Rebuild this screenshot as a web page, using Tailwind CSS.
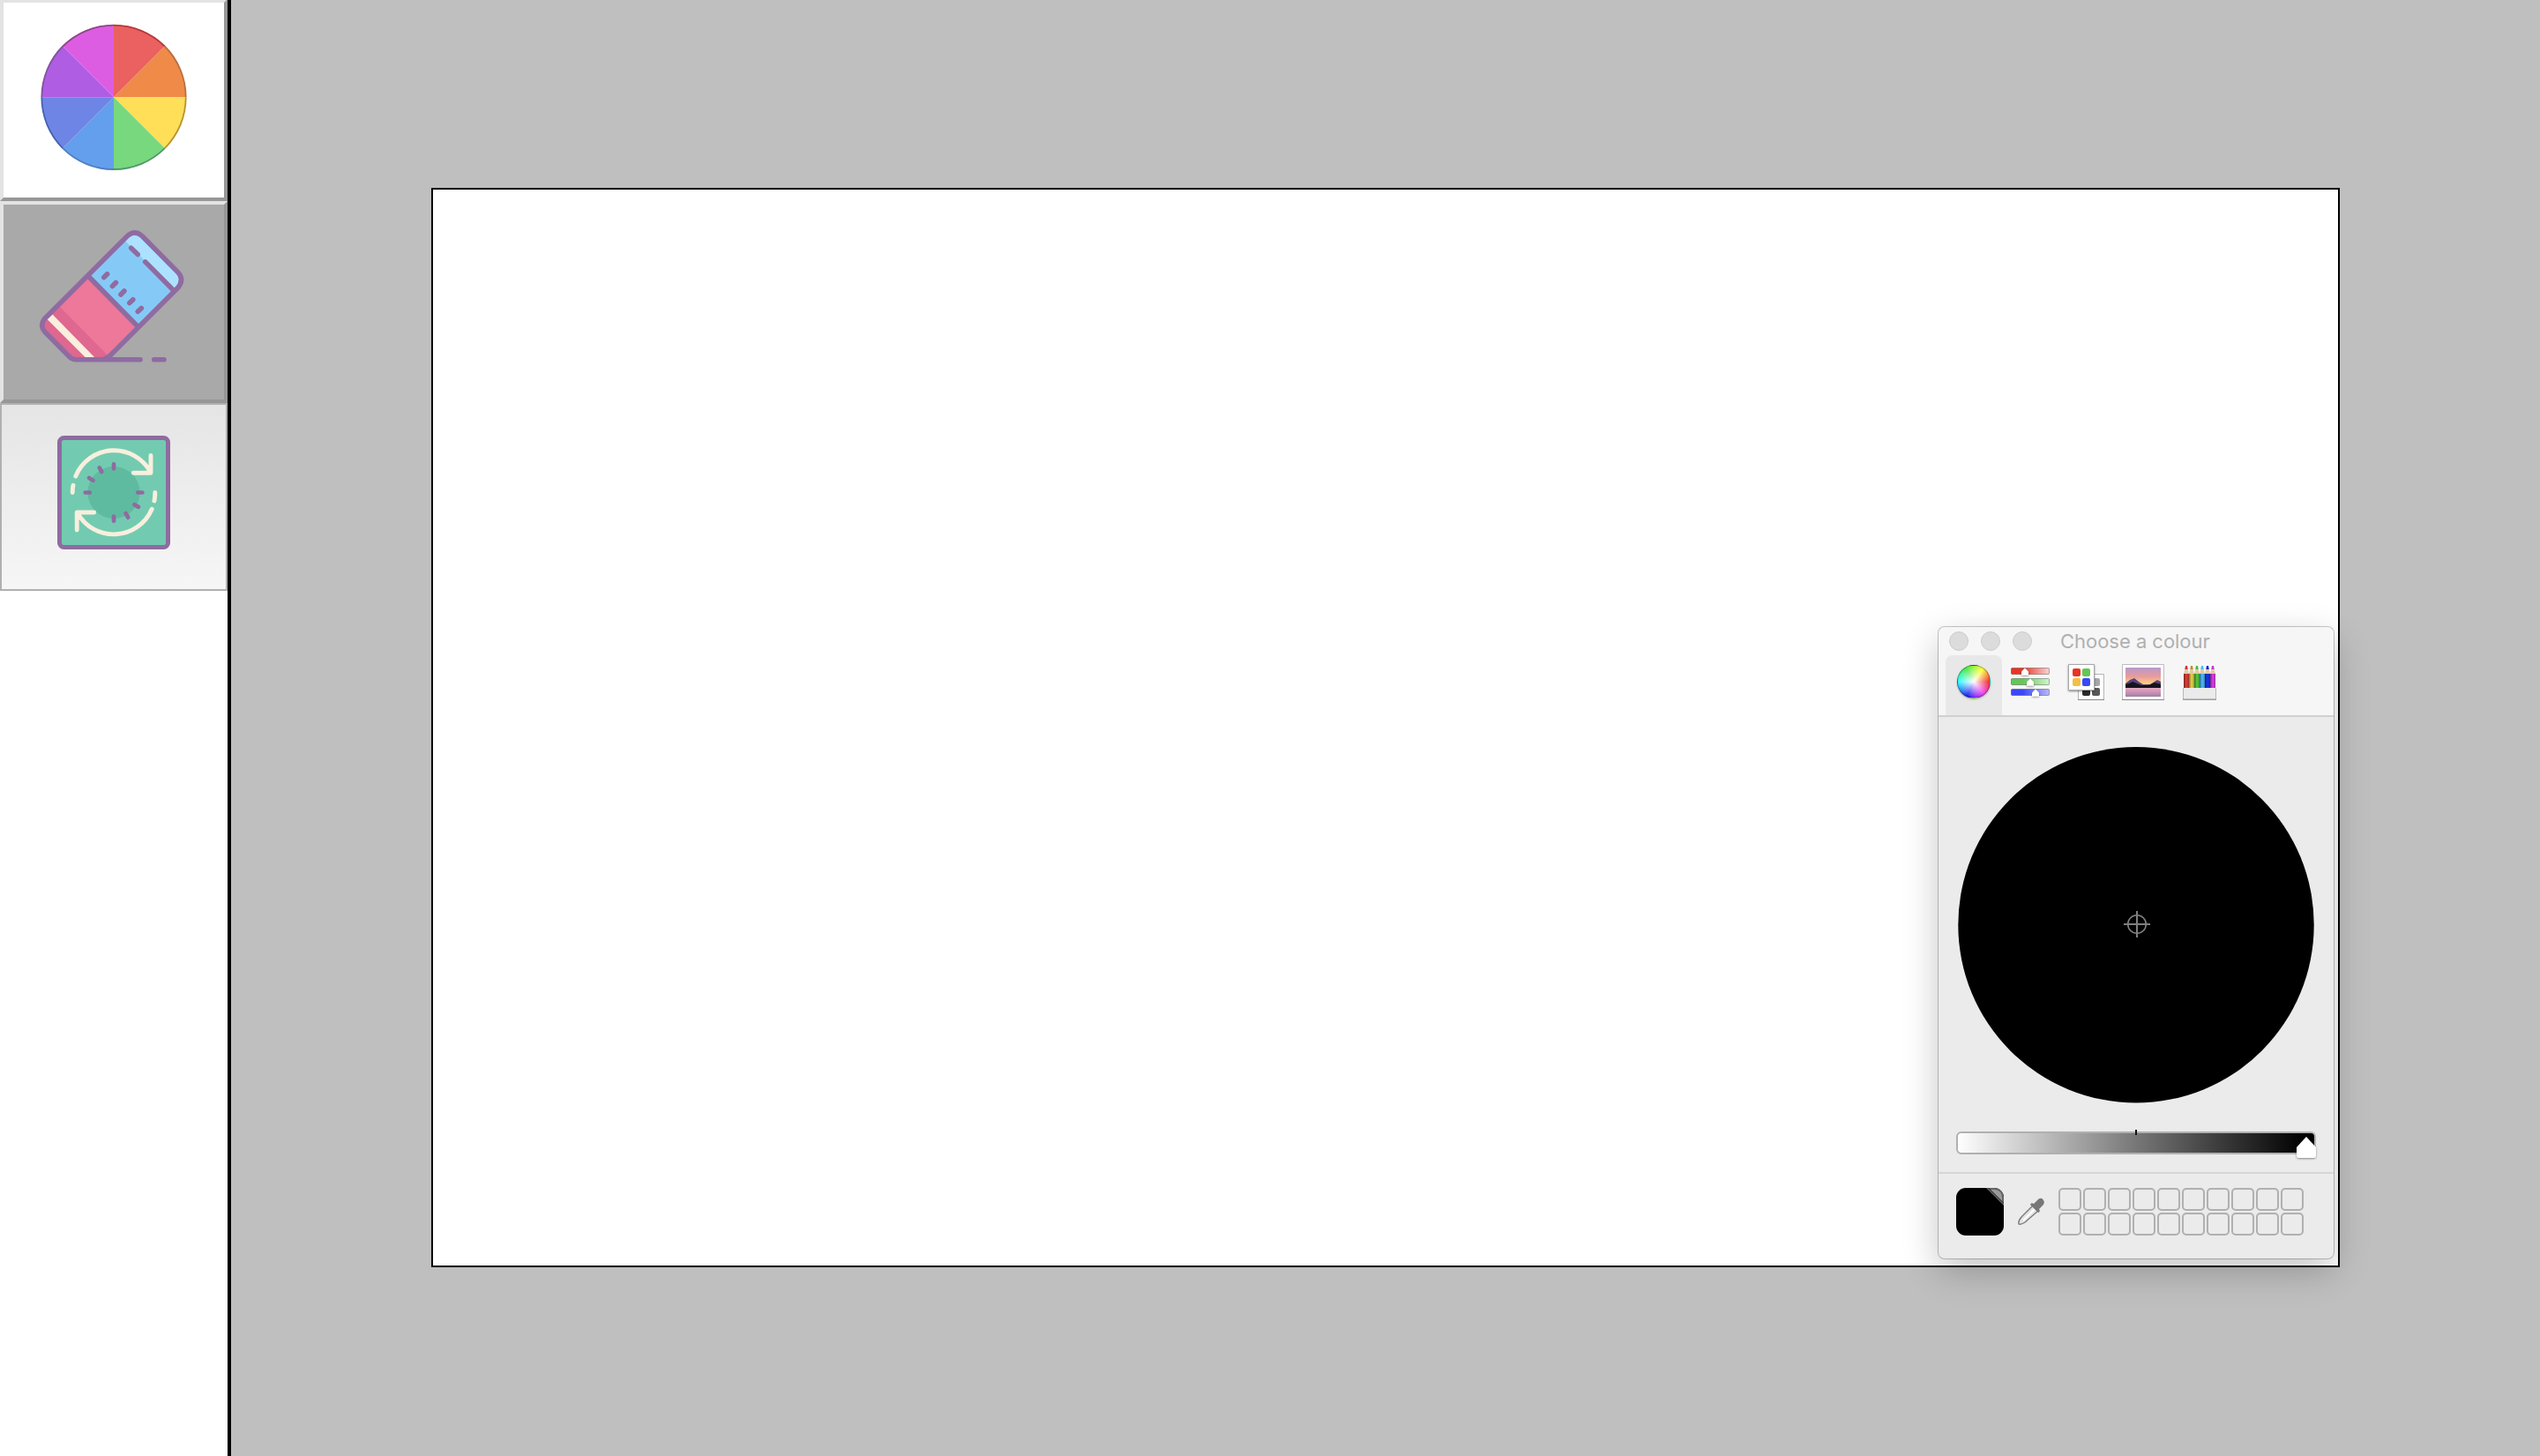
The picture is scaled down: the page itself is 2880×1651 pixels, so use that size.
<!DOCTYPE html>
<html lang="en">
<head>
<meta charset="utf-8">
<title>Paint</title>
<script src="https://cdn.jsdelivr.net/npm/@tailwindcss/browser@4"></script>
</head>
<body class="h-[1651px] w-[2880px] overflow-hidden bg-[#bfbfbf] flex font-['Inter',sans-serif]">
<aside class="h-full w-[262px] shrink-0 border-r-4 border-black bg-white flex flex-col">
  <button class="-mt-px h-[229px] w-full shrink-0 border-4 border-t-[#e3e3e3] border-l-[#e3e3e3] border-r-[#979797] border-b-[#979797] bg-white flex">
    <svg class="size-full" viewBox="4 3 250 221">
      <g transform="translate(129 110.3)">
        <path d="M0 0V-82A82 82 0 0 1 58-58Z" fill="#eb6060"/>
        <path d="M0 0L58-58A82 82 0 0 1 82 0Z" fill="#f08a48"/>
        <path d="M0 0H82A82 82 0 0 1 58 58Z" fill="#ffde58"/>
        <path d="M0 0L58 58A82 82 0 0 1 0 82Z" fill="#77d87e"/>
        <path d="M0 0V82A82 82 0 0 1-58 58Z" fill="#649fee"/>
        <path d="M0 0L-58 58A82 82 0 0 1-82 0Z" fill="#6e85e6"/>
        <path d="M0 0H-82A82 82 0 0 1-58-58Z" fill="#af5de2"/>
        <path d="M0 0L-58-58A82 82 0 0 1 0-82Z" fill="#dc5de2"/>
        <g fill="none" stroke-width="1.8">
          <path d="M0-81.7A81.7 81.7 0 0 1 57.8-57.8" stroke="#b63a3a"/>
          <path d="M57.8-57.8A81.7 81.7 0 0 1 81.7 0" stroke="#b9703f"/>
          <path d="M81.7 0A81.7 81.7 0 0 1 57.8 57.8" stroke="#b8922f"/>
          <path d="M57.8 57.8A81.7 81.7 0 0 1 0 81.7" stroke="#4f9a6b"/>
          <path d="M0 81.7A81.7 81.7 0 0 1-57.8 57.8" stroke="#4f7fc0"/>
          <path d="M-57.8 57.8A81.7 81.7 0 0 1-81.7 0" stroke="#4463ae"/>
          <path d="M-81.7 0A81.7 81.7 0 0 1-57.8-57.8" stroke="#7f559c"/>
          <path d="M-57.8-57.8A81.7 81.7 0 0 1 0-81.7" stroke="#8f4686"/>
        </g>
      </g>
    </svg>
  </button>
  <button class="h-[229px] w-full shrink-0 border-4 border-t-[#e3e3e3] border-l-[#e3e3e3] border-r-[#979797] border-b-[#979797] bg-[#a9a9a9] flex">
    <svg class="size-full" viewBox="4 232 250 221">
      <path d="M101 313L146 267Q153 261 160 267L203 311Q209 318 203 326L156 369Z" fill="#85caf7"/>
      <path d="M142 273L147 268Q153 263 159 269L201 311Q206 317 202 322L196 328Z" fill="#ace2ff"/>
      <path d="M99 316L154 370L118 406H84L51 374Q46 369 51 363Z" fill="#ed7899"/>
      <path d="M68 348L125 406H84L51 374Q46 369 51 363Z" fill="#e0678f"/>
      <path d="M53.500 362L59.500 356.500L108 406H97.500Z" fill="#f9efde"/>
      <g fill="none" stroke="#8f6ba1" stroke-width="5.600" stroke-linecap="round" stroke-linejoin="round">
        <path d="M159 407.700H86Q82 407.700 79 404.700L51 376.500Q44.500 369 50.500 361.500L144 268Q152.500 260 161 267.500L202 309Q209 317 202 326L125 403Q122 406 117 407.700M174.700 407.700H186"/>
        <path stroke-linecap="butt" d="M100 313L156 370"/>
        <path d="M148.700 281.300L156.200 288.500M164.700 296.900L195.500 328M121.600 310.800L117.800 314.600M131.400 320.500L127.400 324.500M140.900 330L137 334M150.800 339.700L146.800 343.600M160.300 349.400L156.300 353.300"/>
      </g>
    </svg>
  </button>
  <button class="h-[213px] w-full shrink-0 border-2 border-[#b0b0b0] bg-linear-to-b from-[#e5e5e5] to-[#f6f6f6] flex">
    <svg class="size-full" viewBox="2 459 254 209">
      <rect x="67.500" y="496.500" width="123" height="124" rx="5" fill="#72cbb0" stroke="#8f6ba1" stroke-width="5"/>
      <circle cx="129" cy="558.500" r="29.600" fill="#5fbb9f"/>
      <g fill="none" stroke="#f9efde" stroke-width="4.900" stroke-linecap="round" stroke-linejoin="round">
        <path d="M85.800 540A47 47 0 0 1 170.500 535M171 516.500V536.300H151.300M83 550.300Q82.200 553 82.200 558.500"/>
        <path d="M172.200 577.200A47 47 0 0 1 88 582M87.200 601V581H106.700M175.800 558.500Q175.700 565 174.900 568"/>
      </g>
      <path d="M129 526.300V531.300M129 585.700V590.700M96.700 558.500H101.800M156.200 558.500H161.400M112.700 530.400L115.300 535M101 542L105.600 544.700M152.400 572.200L157 574.900M142.500 582L145.300 586.700" fill="none" stroke="#8f6ba1" stroke-width="4.700" stroke-linecap="round"/>
    </svg>
  </button>
</aside>
<main class="relative grow pl-[227px] pt-[213px]">
  <div class="h-[1224px] w-[2164px] border-2 border-black bg-white"></div>
  <section class="absolute left-[1936px] top-[711px] h-[716px] w-[448px] rounded-[7px] bg-[#ebebeb] shadow-[0_0_0_1px_rgba(0,0,0,0.22),0_14px_40px_rgba(0,0,0,0.23)] flex flex-col">
    <header class="h-[102px] shrink-0 rounded-t-[7px] border-b-2 border-[#d0d0d0] bg-[#f6f6f6]">
      <div class="flex h-8 items-center gap-[14px] pl-3">
        <i class="size-[22px] rounded-full border border-[#cdcdcd] bg-[#dcdcdc]"></i>
        <i class="size-[22px] rounded-full border border-[#cdcdcd] bg-[#dcdcdc]"></i>
        <i class="size-[22px] rounded-full border border-[#cdcdcd] bg-[#dcdcdc]"></i>
        <span class="ml-[18px] whitespace-nowrap text-[22px] tracking-[-0.03px] text-[#b0b0b0]">Choose a colour</span>
      </div>
      <nav class="flex h-[68px] pl-2">
        <div class="w-16 rounded-t-[8px] bg-[#e8e8e8] pl-[13px] pt-[11px]">
          <div class="size-[38px] rounded-full border border-black/30 bg-[radial-gradient(circle_closest-side,#fff_0%,rgba(255,255,255,0.6)_38%,rgba(255,255,255,0)_100%),conic-gradient(from_90deg,#f02a2a,#f03cf0_50deg,#1a1af0_115deg,#3ff_180deg,#3fe83f_240deg,#ff3_305deg,#f02a2a)] shadow-[0_1px_2px_rgba(0,0,0,0.3)]"></div>
        </div>
        <svg class="h-[68px] w-[320px]" viewBox="2270 743 320 68">
          <defs>
            <linearGradient id="r"><stop offset=".3" stop-color="#ea3323"/><stop offset="1" stop-color="#f8d4d4"/></linearGradient>
            <linearGradient id="g"><stop offset=".3" stop-color="#64c655"/><stop offset="1" stop-color="#d0f5cc"/></linearGradient>
            <linearGradient id="b"><stop offset=".3" stop-color="#3a48f5"/><stop offset="1" stop-color="#b8b8f8"/></linearGradient>
            <linearGradient id="sky" x2="0" y2="1"><stop stop-color="#b69acb"/><stop offset=".45" stop-color="#e99b9b"/><stop offset=".8" stop-color="#ffd27a"/></linearGradient>
            <linearGradient id="sea" x2="0" y2="1"><stop stop-color="#e9a9c4"/><stop offset="1" stop-color="#a37da3"/></linearGradient>
            <linearGradient id="pen"><stop stop-opacity=".45"/><stop offset=".5" stop-opacity="0"/><stop offset="1" stop-opacity=".3"/></linearGradient>
            <filter id="s" x="-30%" y="-30%" width="160%" height="180%"><feDropShadow dx="0" dy="1" stdDeviation=".8" flood-opacity=".45"/></filter>
          </defs>
          <g stroke="#000" stroke-opacity=".3">
            <rect x="2280.500" y="757.500" width="43" height="7" rx="1" fill="url(#r)"/>
            <rect x="2280.500" y="769.500" width="43" height="7" rx="1" fill="url(#g)"/>
            <rect x="2280.500" y="781.500" width="43" height="7" rx="1" fill="url(#b)"/>
          </g>
          <g fill="#fff" filter="url(#s)">
            <path d="M2292 761.500L2296 757.500L2300 761.500V765.500H2292Z"/>
            <path d="M2298 773.500L2302 769.500L2306 773.500V777.500H2298Z"/>
            <path d="M2304 785.500L2308 781.500L2312 785.500V789.500H2304Z"/>
          </g>
          <path d="M2356.500 764.500H2385.500V793.500H2356.500Z" fill="#fff" stroke="#b5b5b5"/><path d="M2356 793.500H2386" stroke="#888"/>
          <rect x="2361" y="780" width="9" height="9" rx="2" fill="#2b2b2b"/><rect x="2372" y="780" width="9" height="9" rx="2" fill="#555759"/><rect x="2372" y="769" width="9" height="9" rx="2" fill="#a5a7aa"/>
          <path d="M2345.500 753.500H2374.500V782.500H2345.500Z" fill="#fff" stroke="#a8a8a8" filter="url(#s)"/>
          <rect x="2350" y="758" width="9" height="9" rx="2" fill="#ea3323"/><rect x="2361" y="758" width="9" height="9" rx="2" fill="#64c655"/><rect x="2350" y="769" width="9" height="9" rx="2" fill="#f5bf42"/><rect x="2361" y="769" width="9" height="9" rx="2" fill="#3a48f5"/>
          <path d="M2406.500 753.500H2453.500V793.500H2406.500Z" fill="#fff" stroke="#bdbdbd"/><path d="M2406 793.500H2454" stroke="#888"/>
          <path d="M2410 757H2450V780H2410Z" fill="url(#sky)"/><path d="M2410 780H2450V790H2410Z" fill="url(#sea)"/>
          <path d="M2410 775L2415 771L2420 769L2425 773L2430 776H2438L2446 771L2450 773V780H2410Z" fill="#56437c"/>
          <path d="M2410 776L2414 775L2418 773L2423 775L2428 777H2436L2443 774L2450 776V780H2410Z" fill="#17131c"/>
          <g>
            <path d="M2476 764L2478 757H2480L2482 764ZM2482 764L2484 757H2486L2488 764ZM2488 764L2490 757H2492L2494 764ZM2494 764L2496 757H2498L2500 764ZM2500 764L2502 757H2504L2506 764ZM2506 764L2508 757H2510L2512 764Z" fill="#e2c9a3"/>
            <path d="M2478 755H2480L2480.700 759H2477.300Z" fill="#c33"/><path d="M2484 755H2486L2486.700 759H2483.300Z" fill="#c09028"/><path d="M2490 755H2492L2492.700 759H2489.300Z" fill="#4db83a"/><path d="M2496 755H2498L2498.700 759H2495.300Z" fill="#4bb8f5"/><path d="M2502 755H2504L2504.700 759H2501.300Z" fill="#1420d0"/><path d="M2508 755H2510L2510.700 759H2507.300Z" fill="#c238cc"/>
            <path d="M2476 764H2482V780H2476Z" fill="#df3f3c"/><path d="M2482 764H2488V780H2482Z" fill="#efd34a"/><path d="M2488 764H2494V780H2488Z" fill="#55cf3c"/><path d="M2494 764H2500V780H2494Z" fill="#50bdfb"/><path d="M2500 764H2506V780H2500Z" fill="#1238f5"/><path d="M2506 764H2512V780H2506Z" fill="#dc3ee8"/>
            <path d="M2476 764H2482V780H2476Z" fill="url(#pen)"/><path d="M2482 764H2488V780H2482Z" fill="url(#pen)"/><path d="M2488 764H2494V780H2488Z" fill="url(#pen)"/><path d="M2494 764H2500V780H2494Z" fill="url(#pen)"/><path d="M2500 764H2506V780H2500Z" fill="url(#pen)"/><path d="M2506 764H2512V780H2506Z" fill="url(#pen)"/>
            <path d="M2475.500 780V793H2512.500V780" fill="#ebebeb" stroke="#b8b8b8"/><path d="M2475 793.200H2513" stroke="#8a8a8a"/>
          </g>
        </svg>
      </nav>
    </header>
    <div class="h-[518px] shrink-0 border-b-2 border-[#d5d5d5] pl-5">
      <svg class="h-[516px] w-[420px]" viewBox="2218 813 420 516">
        <defs><linearGradient id="v"><stop stop-color="#fff"/><stop offset=".5" stop-color="#777"/><stop offset=".97" stop-color="#000"/></linearGradient></defs>
        <circle cx="2422" cy="1048.800" r="201.700"/>
        <path d="M2408 1048H2438M2423 1033V1063" stroke="#7f7f7f" stroke-width="2"/><circle cx="2423" cy="1048" r="10.300" fill="none" stroke="#7f7f7f" stroke-width="1.600"/>
        <rect x="2219" y="1284" width="406" height="24" rx="5" fill="url(#v)" stroke="#b0b0b0" stroke-width="2"/>
        <path d="M2422 1281V1287" stroke="#111" stroke-width="2"/>
        <path d="M2615 1289L2626 1301V1310Q2626 1313 2623 1313H2607Q2604 1313 2604 1310V1301Z" fill="#fff" filter="url(#s)"/>
      </svg>
    </div>
    <footer class="flex grow pl-5 pt-4">
      <svg class="h-[54px] w-[54px]" viewBox="0 0 54 54"><defs><clipPath id="c"><rect width="54" height="54" rx="11"/></clipPath></defs><g clip-path="url(#c)"><path d="M0 0H54V54H0Z"/><path d="M34 0H54V20Z" fill="#666"/><path d="M39 2H44Q52 3 52 11V15Z" fill="#999"/><path d="M36.500 0L54 17.500" stroke="#222" stroke-width="1"/></g></svg>
      <svg class="ml-4 h-[54px] w-[30px]" viewBox="2288 1347 30 54">
        <path d="M2305 1367L2311 1373L2296 1386Q2291 1389 2289 1388Q2288 1385 2292 1380Z" fill="#e3e3e3" stroke="#777" stroke-width="1.300"/><path d="M2307 1371L2294 1384" stroke="#fff" stroke-width="2"/>
        <path d="M2302 1366Q2303 1363 2306 1365L2311 1360Q2315 1357 2317 1361Q2319 1364 2316 1367L2312 1371Q2314 1374 2311 1375Z" fill="#777"/>
      </svg>
      <div class="ml-4 grid h-[54px] grid-cols-[repeat(10,26px)] grid-rows-[26px_26px] gap-[2px]">
        <i class="rounded-[5px] border-2 border-[#b0b0b0]"></i><i class="rounded-[5px] border-2 border-[#b0b0b0]"></i><i class="rounded-[5px] border-2 border-[#b0b0b0]"></i><i class="rounded-[5px] border-2 border-[#b0b0b0]"></i><i class="rounded-[5px] border-2 border-[#b0b0b0]"></i>
        <i class="rounded-[5px] border-2 border-[#b0b0b0]"></i><i class="rounded-[5px] border-2 border-[#b0b0b0]"></i><i class="rounded-[5px] border-2 border-[#b0b0b0]"></i><i class="rounded-[5px] border-2 border-[#b0b0b0]"></i><i class="rounded-[5px] border-2 border-[#b0b0b0]"></i>
        <i class="rounded-[5px] border-2 border-[#b0b0b0]"></i><i class="rounded-[5px] border-2 border-[#b0b0b0]"></i><i class="rounded-[5px] border-2 border-[#b0b0b0]"></i><i class="rounded-[5px] border-2 border-[#b0b0b0]"></i><i class="rounded-[5px] border-2 border-[#b0b0b0]"></i>
        <i class="rounded-[5px] border-2 border-[#b0b0b0]"></i><i class="rounded-[5px] border-2 border-[#b0b0b0]"></i><i class="rounded-[5px] border-2 border-[#b0b0b0]"></i><i class="rounded-[5px] border-2 border-[#b0b0b0]"></i><i class="rounded-[5px] border-2 border-[#b0b0b0]"></i>
      </div>
    </footer>
  </section>
</main>
</body>
</html>
